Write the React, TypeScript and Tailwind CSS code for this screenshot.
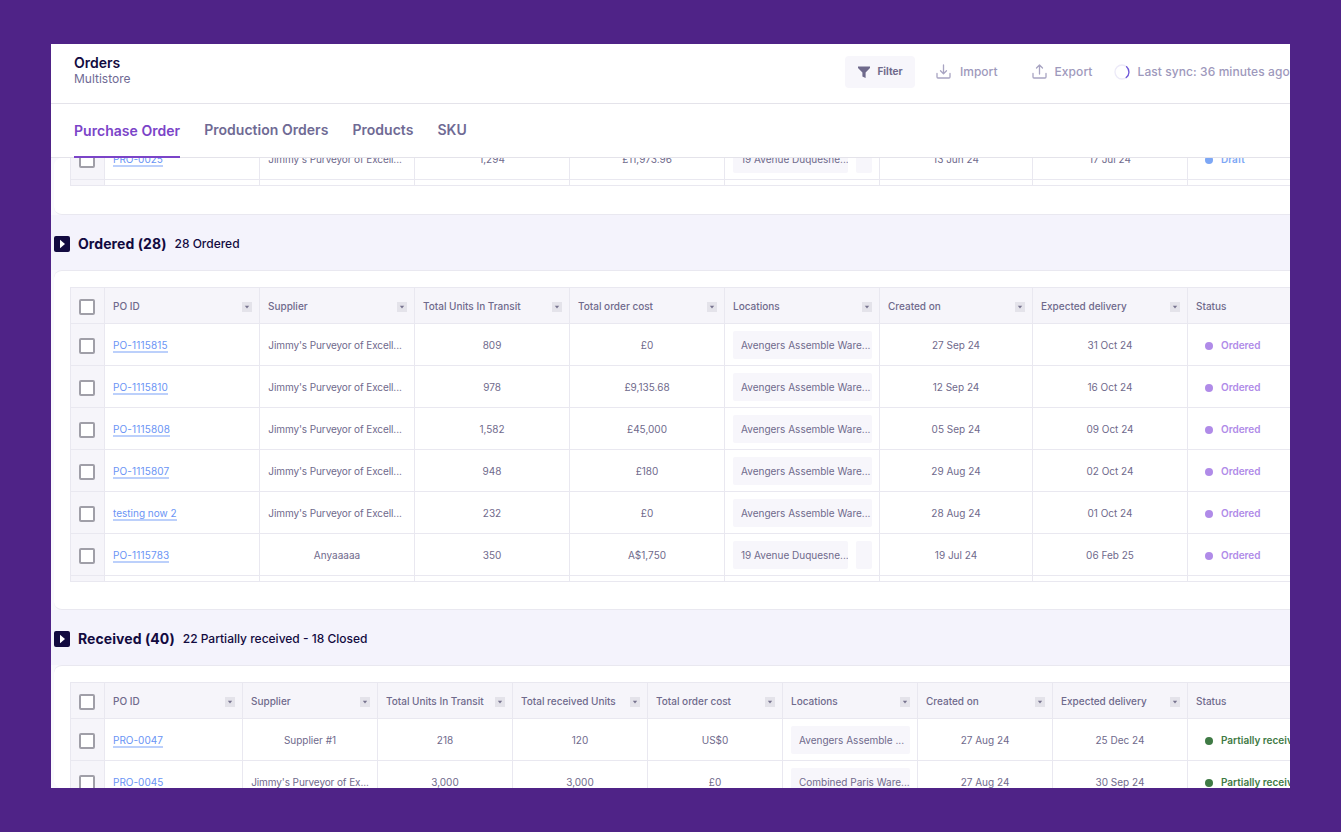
import React from "react";

type Row = { id: string; supplier: string; values: string[]; loc: string; extra?: boolean; created: string; expected: string; status: string };

const G2 = "grid grid-cols-[34px_155px_155px_155px_155px_155px_153px_155px_200px]";
const G3 = "grid grid-cols-[34px_138px_135px_135px_135px_135px_135px_135px_135px_200px]";

const statusStyle: Record<string, { dot: string; text: string }> = {
  Draft: { dot: "bg-[#7DA7F5]", text: "text-[#7DA7F5]" },
  Ordered: { dot: "bg-[#B08BE8]", text: "text-[#B08BE8]" },
  "Partially received": { dot: "bg-[#3F7A45]", text: "text-[#3F7A45]" },
};

function Checkbox() {
  return <span className="block w-4 h-4 border-2 border-[#A09FA8] rounded-[2px] bg-white" />;
}

function CheckCell() {
  return (
    <div className="flex items-center pl-2 pt-[2px] bg-[#F6F5FA] border-r border-b border-[#E9E8F0]">
      <Checkbox />
    </div>
  );
}

function SortBtn() {
  return (
    <span className="flex items-center justify-center w-[10px] h-[10px] bg-[#E4E3EA] shrink-0">
      <svg width="6" height="4" viewBox="0 0 6 4">
        <path d="M0.8 0.8h4.4L3 3.4z" fill="#77738F" />
      </svg>
    </span>
  );
}

function HeadCell({ label, sort = true }: { label: string; sort?: boolean }) {
  return (
    <div className="flex items-center justify-between pl-2 pr-[7px] pt-[2px] bg-[#F6F5FA] border-r border-b border-[#E9E8F0] text-[10px] font-medium text-[#6F6A8C] whitespace-nowrap">
      <span>{label}</span>
      {sort && <SortBtn />}
    </div>
  );
}

function Cell({ children, className = "" }: { children: React.ReactNode; className?: string }) {
  return (
    <div className={"flex items-center justify-center pt-[2px] border-r border-b border-[#E9E8F0] text-[10px] text-[#6F6A8C] whitespace-nowrap overflow-hidden " + className}>
      {children}
    </div>
  );
}

function BodyRow({ row, grid }: { row: Row; grid: string }) {
  const s = statusStyle[row.status];
  const isPo = row.id.startsWith("PO-");
  const isLongJimmy = row.supplier === J;
  const isShortJimmy = row.supplier.startsWith("Jimmy") && !isLongJimmy;
  return (
    <div className={grid + " h-[42px]"}>
      <CheckCell />
      <div className="flex items-center pl-2 pt-[3px] border-r border-b border-[#E9E8F0]">
        <span className={"text-[10px] leading-[12px] text-[#6A94F5] border-b-2 border-[#BCD0FB] whitespace-nowrap " + (isPo ? "tracking-[0.15px]" : "")}>{row.id}</span>
      </div>
      <Cell className={isLongJimmy ? "tracking-[-0.1px] pr-1" : isShortJimmy ? "tracking-[-0.1px]" : ""}>{row.supplier}</Cell>
      {row.values.map((v, i) => (
        <Cell key={i}>{v}</Cell>
      ))}
      <div className="flex items-center gap-2 pl-2 pr-[7px] pt-px border-r border-b border-[#E9E8F0] text-[10px] text-[#6F6A8C] whitespace-nowrap">
        <span className="flex-1 min-w-0 h-7 flex items-center pl-2 bg-[#F7F6FB] rounded-[2px] overflow-hidden">{row.loc}</span>
        {row.extra && <span className="w-4 h-7 bg-[#F7F6FB] rounded-[2px] shrink-0" />}
      </div>
      <Cell>{row.created}</Cell>
      <Cell>{row.expected}</Cell>
      <div className="flex items-center pl-[17px] pt-[2px] border-b border-[#E9E8F0] whitespace-nowrap text-[10px] font-semibold">
        <span className={"w-2 h-2 rounded-full mr-2 shrink-0 " + s.dot} />
        <span className={s.text}>{row.status}</span>
      </div>
    </div>
  );
}

function Stub({ grid, count, h }: { grid: string; count: number; h: string }) {
  return (
    <div className={grid + " " + h}>
      {Array.from({ length: count }).map((_, i) => (
        <div key={i} className={i === 0 ? "bg-[#F6F5FA] border-r border-[#E9E8F0]" : "border-r border-[#E9E8F0]"} />
      ))}
    </div>
  );
}

function SectionHead({ title, sub }: { title: string; sub: string }) {
  return (
    <div className="h-[55px] flex items-center pl-[3px] pt-[2px] bg-[#F4F3FC] shrink-0">
      <span className="flex items-center justify-center w-4 h-4 bg-[#120A40] rounded-[2px]">
        <svg width="8" height="10" viewBox="0 0 8 10">
          <path d="M2 0.8 7 5 2 9.2z" fill="#ffffff" />
        </svg>
      </span>
      <span className="ml-2 text-sm font-bold tracking-[0.07px] text-[#120A40] whitespace-nowrap">{title}</span>
      <span className="ml-2 text-xs font-[450] text-[#120A40] whitespace-nowrap">{sub}</span>
    </div>
  );
}

const heads2 = ["PO ID", "Supplier", "Total Units In Transit", "Total order cost", "Locations", "Created on", "Expected delivery"];
const heads3 = ["PO ID", "Supplier", "Total Units In Transit", "Total received Units", "Total order cost", "Locations", "Created on", "Expected delivery"];

const J = "Jimmy's Purveyor of Excell...";
const AV = "Avengers Assemble Ware...";
const ordered: Row[] = [
  { id: "PO-1115815", supplier: J, values: ["809", "£0"], loc: AV, created: "27 Sep 24", expected: "31 Oct 24", status: "Ordered" },
  { id: "PO-1115810", supplier: J, values: ["978", "£9,135.68"], loc: AV, created: "12 Sep 24", expected: "16 Oct 24", status: "Ordered" },
  { id: "PO-1115808", supplier: J, values: ["1,582", "£45,000"], loc: AV, created: "05 Sep 24", expected: "09 Oct 24", status: "Ordered" },
  { id: "PO-1115807", supplier: J, values: ["948", "£180"], loc: AV, created: "29 Aug 24", expected: "02 Oct 24", status: "Ordered" },
  { id: "testing now 2", supplier: J, values: ["232", "£0"], loc: AV, created: "28 Aug 24", expected: "01 Oct 24", status: "Ordered" },
  { id: "PO-1115783", supplier: "Anyaaaaa", values: ["350", "A$1,750"], loc: "19 Avenue Duquesne...", extra: true, created: "19 Jul 24", expected: "06 Feb 25", status: "Ordered" },
];
const received: Row[] = [
  { id: "PRO-0047", supplier: "Supplier #1", values: ["218", "120", "US$0"], loc: "Avengers Assemble ...", created: "27 Aug 24", expected: "25 Dec 24", status: "Partially received" },
  { id: "PRO-0045", supplier: "Jimmy's Purveyor of Ex...", values: ["3,000", "3,000", "£0"], loc: "Combined Paris Ware...", created: "27 Aug 24", expected: "30 Sep 24", status: "Partially received" },
];
const draft: Row = { id: "PRO-0025", supplier: J, values: ["1,294", "£11,973.96"], loc: "19 Avenue Duquesne...", extra: true, created: "13 Jun 24", expected: "17 Jul 24", status: "Draft" };

function Panel({ children, className = "", grow }: { children: React.ReactNode; className?: string; grow?: boolean }) {
  return (
    <div className={"bg-[#F9F9FD] pl-[3px] flex flex-col shrink-0 " + (grow ? "flex-1 min-h-0" : "")}>
      <div className={"bg-white pl-4 border-[#E9E8F0] rounded-l-lg " + className}>{children}</div>
    </div>
  );
}

function App() {
  return (
    <div className="w-[1341px] h-[832px] bg-[#4F2387] pt-[44px] pl-[51px] overflow-hidden font-['Inter',sans-serif]">
      <div className="w-[1239px] h-[744px] bg-white overflow-hidden flex flex-col">
        <header className="h-[60px] shrink-0 flex items-center pl-[23px] pb-[4px] border-b border-[#E4E3EA]">
          <div className="pb-[3px]">
            <div className="text-sm leading-[17px] font-semibold text-[#120A40]">Orders</div>
            <div className="text-xs leading-[15px] text-[#6F6A94]">Multistore</div>
          </div>
          <div className="ml-auto w-[445px] shrink-0 flex items-center whitespace-nowrap text-xs font-medium text-[#9E99BC]">
            <button className="w-[70px] h-8 shrink-0 flex items-center justify-center gap-[6px] bg-[#F7F6FB] rounded text-[10px] font-bold text-[#6F6A8C]">
              <svg width="14" height="14" viewBox="0 0 14 14">
                <path d="M1 1.5h12v1.6L8.6 7.6V13L5.4 11.6v-4L1 3.1z" fill="#6F6A8C" />
              </svg>
              Filter
            </button>
            <span className="ml-[21px] shrink-0 flex items-center gap-[9px]">
              <svg width="15" height="15" viewBox="0 0 15 15" fill="none" stroke="#A8A4C2" strokeWidth="1.3" strokeLinecap="round" strokeLinejoin="round">
                <path d="M7.5 1v8.5M4.5 6.8l3 3 3-3M1 9.5V13a1 1 0 0 0 1 1h11a1 1 0 0 0 1-1V9.5" />
              </svg>
              Import
            </span>
            <span className="ml-[34px] shrink-0 flex items-center gap-2 tracking-[0.08px]">
              <svg width="15" height="15" viewBox="0 0 15 15" fill="none" stroke="#A8A4C2" strokeWidth="1.3" strokeLinecap="round" strokeLinejoin="round">
                <path d="M7.5 10V1.2M4.5 4l3-3 3 3M1 9.5V13a1 1 0 0 0 1 1h11a1 1 0 0 0 1-1V9.5" />
              </svg>
              Export
            </span>
            <span className="ml-[21px] shrink-0 flex items-center gap-2 tracking-[0.08px]">
              <svg width="16" height="16" viewBox="0 0 16 16" fill="none" strokeWidth="1.3">
                <circle cx="8" cy="8" r="7" stroke="#ECEAF8" />
                <path d="M12.6 2.8A7 7 0 0 1 12.2 13.6" stroke="#6D55D8" strokeLinecap="round" />
              </svg>
              Last sync: 36 minutes ago
            </span>
          </div>
        </header>

        <nav className="h-[54px] shrink-0 flex items-stretch gap-6 pl-[23px] border-b border-[#E4E3EA] text-sm font-semibold tracking-[0.03px] text-[#6F6A94] whitespace-nowrap">
          <span className="flex items-center pt-px text-[#7B44C8] border-b-2 border-[#7B44C8] h-[54px]">Purchase Order</span>
          <span className="flex items-center pt-px pb-[2px]">Production Orders</span>
          <span className="flex items-center pt-px pb-[2px]">Products</span>
          <span className="flex items-center pt-px pb-[2px]">SKU</span>
        </nav>

        <main className="flex-1 min-h-0 overflow-hidden flex flex-col bg-[#F4F3FC]">
          <Panel className="h-[57px] overflow-hidden border-b">
            <div className="-mt-[20px] border-l border-b border-[#E9E8F0] w-max">
              <BodyRow row={draft} grid={G2} />
              <Stub grid={G2} count={9} h="h-[5px]" />
            </div>
          </Panel>

          <SectionHead title="Ordered (28)" sub="28 Ordered" />

          <Panel className="h-[340px] border-t border-b pt-[16px]">
            <div className="border-l border-t border-b border-[#E9E8F0] w-max">
              <div className={G2 + " h-[36px]"}>
                <CheckCell />
                {heads2.map((h) => (
                  <HeadCell key={h} label={h} />
                ))}
                <HeadCell label="Status" sort={false} />
              </div>
              {ordered.map((r) => (
                <BodyRow key={r.id} row={r} grid={G2} />
              ))}
              <Stub grid={G2} count={9} h="h-[5px]" />
            </div>
          </Panel>

          <SectionHead title="Received (40)" sub="22 Partially received - 18 Closed" />

          <Panel grow className="flex-1 min-h-0 overflow-hidden border-t pt-[16px]">
            <div className="border-l border-t border-[#E9E8F0] w-max">
              <div className={G3 + " h-[36px]"}>
                <CheckCell />
                {heads3.map((h) => (
                  <HeadCell key={h} label={h} />
                ))}
                <HeadCell label="Status" sort={false} />
              </div>
              {received.map((r) => (
                <BodyRow key={r.id} row={r} grid={G3} />
              ))}
            </div>
          </Panel>
        </main>
      </div>
    </div>
  );
}

export default App;
